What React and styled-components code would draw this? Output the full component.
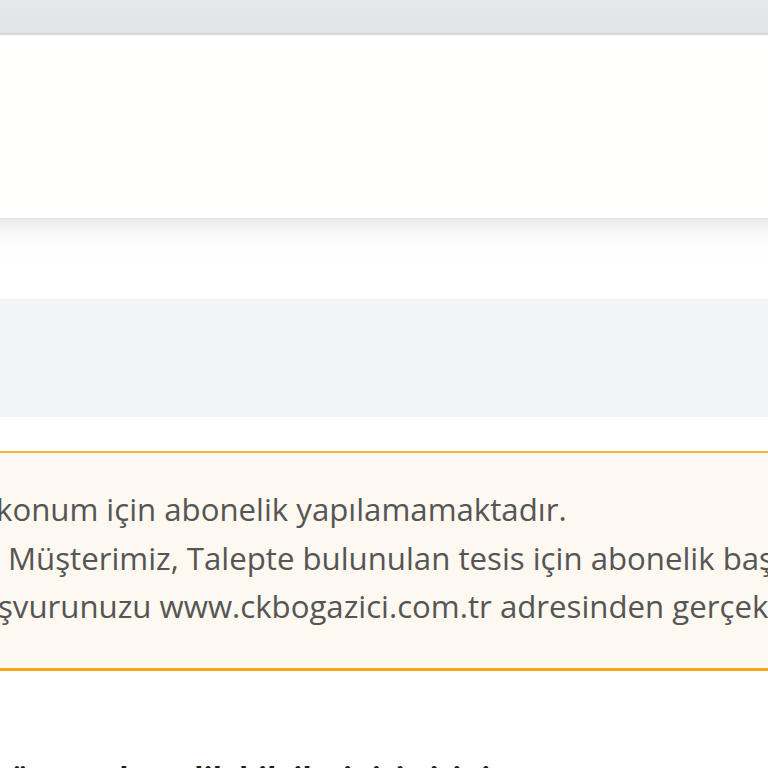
import React from 'react';
import styled, { createGlobalStyle } from 'styled-components';

const GlobalStyle = createGlobalStyle`
  html, body {
    margin: 0;
    padding: 0;
    background: #ffffff;
  }
  body {
    font-family: "Open Sans", "Noto Sans", "Liberation Sans", sans-serif;
    overflow: hidden;
  }
`;

const alertLines = [
  { text: 'konum için abonelik yapılamamaktadır.', indent: -4 },
  { text: 'Müşterimiz, Talepte bulunulan tesis için abonelik başvurusu', indent: 8 },
  { text: 'şvurunuzu www.ckbogazici.com.tr adresinden gerçekleştirebilirsiniz.', indent: -2 },
];

export default function App() {
  return (
    <>
      <GlobalStyle />
      <Page>
        <TopBar />
        <HeroCard />
        <Section>
          <InfoBox />
          <Alert>
            {alertLines.map((line) => (
              <AlertLine key={line.text} indent={line.indent}>
                {line.text}
              </AlertLine>
            ))}
          </Alert>
          <Heading>üzere abonelik bilgilerinizi giriniz</Heading>
        </Section>
      </Page>
    </>
  );
}

const Page = styled.div`
  width: 768px;
  height: 768px;
  overflow: hidden;
  display: flex;
  flex-direction: column;
`;

const TopBar = styled.div`
  height: 33px;
  flex-shrink: 0;
  background: linear-gradient(#e5e8eb, #e1e4e7);
  border-bottom: 2px solid #d8dbde;
`;

const HeroCard = styled.div`
  height: 182px;
  flex-shrink: 0;
  background: #fffffe;
  border-top: 1px solid #f7f7f7;
`;

const Section = styled.div`
  display: flex;
  flex-direction: column;
  background: linear-gradient(#e9e9e9 0px, #f4f4f4 8px, #fbfbfb 20px, #fefefe 30px, #ffffff 60px);
  border-top: 1px solid #e4e4e4;
  padding-top: 80px;
`;

const InfoBox = styled.div`
  height: 117px;
  background: #f3f4f5;
  border-top: 1px solid #f0f1f2;
`;

const Alert = styled.div`
  margin-top: 34px;
  background: #fdf8f0;
  border-top: 2px solid #f3b23e;
  border-bottom: 3px solid #f4a51c;
  padding: 32px 0 37px;
  display: flex;
  flex-direction: column;
`;

const AlertLine = styled.div`
  font-size: 31.2px;
  line-height: 48.5px;
  color: #555555;
  white-space: nowrap;
  margin-left: ${({ indent }) => indent}px;
`;

const Heading = styled.h2`
  margin: 87px 0 0 0;
  padding-left: 10px;
  font-size: 30px;
  line-height: 40px;
  font-weight: 700;
  color: #1c1c1c;
  white-space: nowrap;
`;
